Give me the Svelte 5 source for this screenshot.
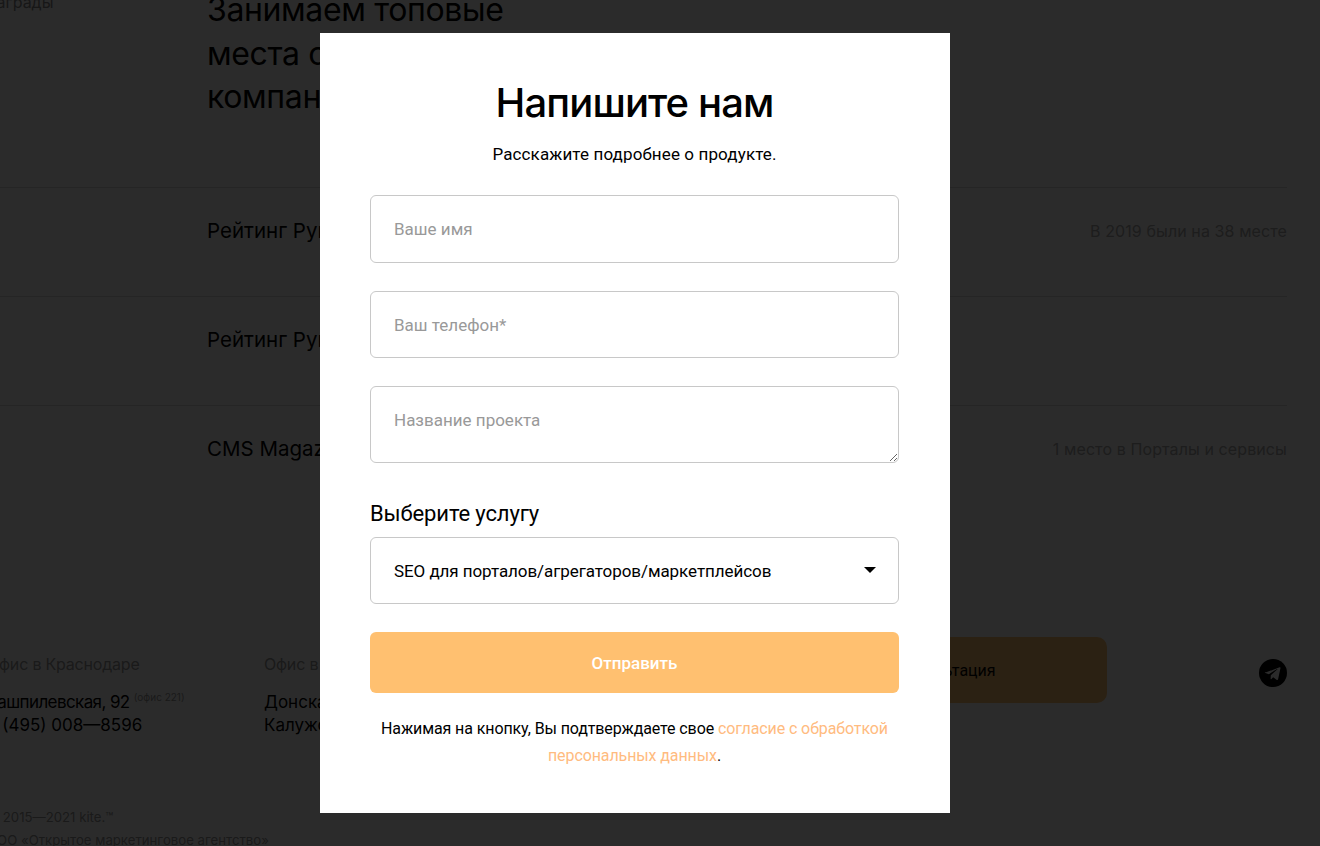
<script>
  const awards = [
    { name: "Рейтинг Рунета", note: "В 2019 были на 38 месте" },
    { name: "Рейтинг Рунета", note: "" },
    { name: "CMS Magazine", note: "1 место в Порталы и сервисы" },
  ];

  let name = "";
  let phone = "";
  let project = "";
  let service = "seo";
</script>

<div class="page">
  <section class="awards">
    <div class="awards-head">
      <span class="awards-label">награды</span>
      <h2>Занимаем топовые<br />места среди<br />компаний</h2>
    </div>
    {#each awards as award}
      <div class="award">
        <span class="award-name">{award.name}</span>
        <span class="award-note">{award.note}</span>
      </div>
    {/each}
  </section>

  <footer>
    <div class="footer-top">
      <div class="office">
        <p class="office-title">Офис в Краснодаре</p>
        <p class="office-line street">Рашпилевская, 92 <sup>(офис 221)</sup></p>
        <p class="office-line">8 (495) 008—8596</p>
      </div>
      <div class="office">
        <p class="office-title">Офис в Москве</p>
        <p class="office-line">Донская, 1</p>
        <p class="office-line">Калужская, 2</p>
      </div>
      <a class="consult" href="#top">Консультация</a>
      <span class="telegram">
        <svg viewBox="0 0 28 28" width="28" height="28" aria-hidden="true">
          <circle cx="14" cy="14" r="14" fill="#000" />
          <path d="M6.5 13.6 20.6 8.2c.6-.2 1.1.2.9.9l-2.4 11.2c-.2.8-.7 1-1.3.6l-3.6-2.7-1.8 1.7c-.3.3-.5.4-.8 0l.2-3.6 6.6-6c.3-.3 0-.4-.4-.2l-8.1 5.1-3.5-1.1c-.8-.2-.8-.8.1-1.2z" fill="#fff" />
        </svg>
      </span>
    </div>
    <div class="legal">
      <p>© 2015—2021 kite.™</p>
      <p>ООО «Открытое маркетинговое агентство»</p>
    </div>
  </footer>
</div>

<div class="overlay">
  <form class="modal" on:submit|preventDefault>
    <h1>Напишите нам</h1>
    <p class="lead">Расскажите подробнее о продукте.</p>

    <input class="field name" type="text" placeholder="Ваше имя" bind:value={name} />
    <input class="field phone" type="tel" placeholder="Ваш телефон*" bind:value={phone} />
    <textarea class="field project" placeholder="Название проекта" bind:value={project}></textarea>

    <label class="select-label" for="service">Выберите услугу</label>
    <div class="select-wrap">
      <select id="service" class="field select" bind:value={service}>
        <option value="seo">SEO для порталов/агрегаторов/маркетплейсов</option>
      </select>
    </div>

    <button type="submit">Отправить</button>

    <p class="consent">
      Нажимая на кнопку, Вы подтверждаете свое <a href="#top">согласие с обработкой персональных данных</a>.
    </p>
  </form>
</div>

<style>
  :global(body) {
    background: #fff;
    overflow: hidden;
  }

  .page {
    width: 1333px;
    height: 846px;
    margin-left: -13px;
    overflow: hidden;
    box-sizing: border-box;
    padding-right: 33px;
    font-family: Inter, sans-serif;
    color: #000;
  }

  .awards-head {
    display: grid;
    grid-template-columns: 220px 1fr;
    height: 199px;
    margin-top: -12px;
  }

  .awards-label {
    font-size: 16px;
    line-height: 28px;
    color: #888;
  }

  h2 {
    margin: 0;
    font-size: 32px;
    font-weight: 400;
    letter-spacing: -0.37px;
    line-height: 43.5px;
  }

  .award {
    display: grid;
    grid-template-columns: 220px 1fr auto;
    height: 109px;
    box-sizing: border-box;
    border-top: 1px solid #d9d9d9;
    padding-top: 28px;
  }

  .award-name {
    grid-column: 2;
    font-size: 20.5px;
    line-height: 30px;
  }

  .award-note {
    font-size: 16px;
    letter-spacing: 0.1px;
    line-height: 30px;
    color: #aaa;
  }

  footer {
    margin-top: 87px;
  }

  .footer-top {
    display: flex;
    align-items: flex-start;
    height: 205px;
    padding-top: 51px;
    box-sizing: border-box;
  }

  .office {
    width: 277px;
    flex: none;
  }

  .office-title {
    margin: 0 0 15px;
    font-size: 16px;
    letter-spacing: -0.2px;
    line-height: 24px;
    color: #999;
  }

  .office-line {
    margin: 0;
    font-size: 17px;
    line-height: 23px;
  }

  .street {
    letter-spacing: -0.6px;
  }

  sup {
    font-size: 10px;
    letter-spacing: 0;
    line-height: 0;
    color: #999;
  }

  .consult {
    flex: none;
    display: flex;
    align-items: center;
    justify-content: center;
    width: 328px;
    height: 66px;
    margin: -15px 0 0 238px;
    border-radius: 10px;
    background: #ffc070;
    color: #000;
    font-family: Roboto, sans-serif;
    font-size: 16px;
    text-decoration: none;
  }

  .telegram {
    display: block;
    height: 28px;
    margin-left: auto;
    margin-top: 7px;
  }

  .legal p {
    margin: 0;
    font-size: 13.2px;
    line-height: 23px;
    color: #999;
  }

  .overlay {
    position: fixed;
    inset: 0;
    background: rgba(0, 0, 0, 0.83);
  }

  .modal {
    display: flex;
    flex-direction: column;
    width: 630px;
    height: 780px;
    margin: 33px 0 0 320px;
    padding: 46px 51px 0 50px;
    box-sizing: border-box;
    background: #fff;
    font-family: Roboto, sans-serif;
    color: #000;
  }

  h1 {
    margin: 0;
    font-family: Inter, sans-serif;
    font-size: 40px;
    font-weight: 500;
    letter-spacing: -0.9px;
    line-height: 48px;
    text-align: center;
  }

  .lead {
    margin: 15px 0 0;
    font-size: 17px;
    letter-spacing: 0.12px;
    line-height: 24px;
    text-align: center;
  }

  .field {
    display: block;
    width: 100%;
    box-sizing: border-box;
    border: 1px solid #c8c8c8;
    border-radius: 6px;
    background: #fff;
    padding: 0 23px;
    font-family: Roboto, sans-serif;
    font-size: 17px;
    color: #000;
    outline: none;
  }

  .field::placeholder {
    color: #999;
    opacity: 1;
  }

  .name {
    height: 68px;
    margin-top: 29px;
  }

  .phone {
    height: 67px;
    margin-top: 28px;
  }

  .project {
    height: 77px;
    margin-top: 28px;
    padding-top: 23px;
    line-height: 20px;
  }

  .select-label {
    margin-top: 37px;
    font-size: 22px;
    letter-spacing: -0.13px;
    line-height: 28px;
  }

  .select-wrap {
    position: relative;
    margin-top: 9px;
  }

  .select-wrap::after {
    content: "";
    position: absolute;
    top: 30px;
    right: 23px;
    border-left: 6px solid transparent;
    border-right: 6px solid transparent;
    border-top: 6px solid #000;
    pointer-events: none;
  }

  .select {
    height: 67px;
    letter-spacing: -0.07px;
    appearance: none;
  }

  button {
    height: 61px;
    margin-top: 28px;
    border: 0;
    border-radius: 6px;
    background: #ffc070;
    color: #fff;
    font-family: Roboto, sans-serif;
    font-size: 17px;
    font-weight: 500;
  }

  .consent {
    margin: 22px 0 0;
    font-size: 16px;
    letter-spacing: -0.1px;
    line-height: 27px;
    text-align: center;
  }

  .consent a {
    color: #ffbb80;
    text-decoration: none;
  }
</style>
